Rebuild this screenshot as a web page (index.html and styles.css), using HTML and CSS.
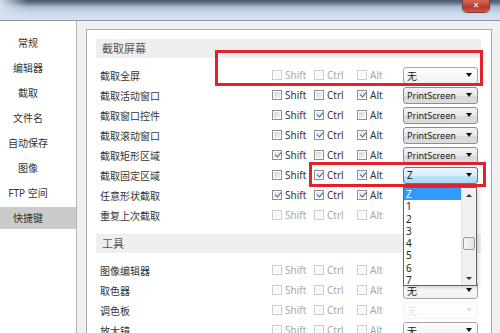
FILE: index.html
```html
<!DOCTYPE html>
<html lang="zh-CN">
<head>
  <meta charset="UTF-8">
  <title>选项 - 快捷键</title>
  <link rel="stylesheet" href="styles.css">
</head>
<body>
  <div class="titlebar">
    <span class="close">✕</span>
  </div>

  <div class="frame">
    <ul class="nav">
      <li>常规</li>
      <li>编辑器</li>
      <li>截取</li>
      <li>文件名</li>
      <li>自动保存</li>
      <li>图像</li>
      <li>FTP 空间</li>
      <li class="active">快捷键</li>
    </ul>

    <div class="panel">
      <div class="section-head">截取屏幕</div>
      <div class="rows">
        <div class="row off">
          <span class="label">截取全屏</span>
          <span class="chk"><i class="box"></i>Shift</span>
          <span class="chk"><i class="box"></i>Ctrl</span>
          <span class="chk"><i class="box"></i>Alt</span>
          <span class="select plain">无</span>
        </div>
        <div class="row">
          <span class="label">截取活动窗口</span>
          <span class="chk"><i class="box"></i>Shift</span>
          <span class="chk"><i class="box"></i>Ctrl</span>
          <span class="chk"><i class="box on"></i>Alt</span>
          <span class="select">PrintScreen</span>
        </div>
        <div class="row">
          <span class="label">截取窗口控件</span>
          <span class="chk"><i class="box"></i>Shift</span>
          <span class="chk"><i class="box on"></i>Ctrl</span>
          <span class="chk"><i class="box"></i>Alt</span>
          <span class="select">PrintScreen</span>
        </div>
        <div class="row">
          <span class="label">截取滚动窗口</span>
          <span class="chk"><i class="box"></i>Shift</span>
          <span class="chk"><i class="box on"></i>Ctrl</span>
          <span class="chk"><i class="box on"></i>Alt</span>
          <span class="select">PrintScreen</span>
        </div>
        <div class="row">
          <span class="label">截取矩形区域</span>
          <span class="chk"><i class="box on"></i>Shift</span>
          <span class="chk"><i class="box"></i>Ctrl</span>
          <span class="chk"><i class="box"></i>Alt</span>
          <span class="select">PrintScreen</span>
        </div>
        <div class="row">
          <span class="label">截取固定区域</span>
          <span class="chk"><i class="box"></i>Shift</span>
          <span class="chk"><i class="box on"></i>Ctrl</span>
          <span class="chk"><i class="box on"></i>Alt</span>
          <span class="select open">Z</span>
        </div>
        <div class="row">
          <span class="label">任意形状截取</span>
          <span class="chk"><i class="box on"></i>Shift</span>
          <span class="chk"><i class="box on"></i>Ctrl</span>
          <span class="chk"><i class="box on"></i>Alt</span>
        </div>
        <div class="row off">
          <span class="label">重复上次截取</span>
          <span class="chk"><i class="box"></i>Shift</span>
          <span class="chk"><i class="box"></i>Ctrl</span>
          <span class="chk"><i class="box"></i>Alt</span>
        </div>
      </div>

      <div class="section-head">工具</div>
      <div class="rows">
        <div class="row off">
          <span class="label">图像编辑器</span>
          <span class="chk"><i class="box"></i>Shift</span>
          <span class="chk"><i class="box"></i>Ctrl</span>
          <span class="chk"><i class="box"></i>Alt</span>
        </div>
        <div class="row off">
          <span class="label">取色器</span>
          <span class="chk"><i class="box"></i>Shift</span>
          <span class="chk"><i class="box"></i>Ctrl</span>
          <span class="chk"><i class="box"></i>Alt</span>
          <span class="select plain">无</span>
        </div>
        <div class="row off">
          <span class="label">调色板</span>
          <span class="chk"><i class="box"></i>Shift</span>
          <span class="chk"><i class="box"></i>Ctrl</span>
          <span class="chk"><i class="box"></i>Alt</span>
          <span class="select plain ghost">无</span>
        </div>
        <div class="row off">
          <span class="label">放大镜</span>
          <span class="chk"><i class="box"></i>Shift</span>
          <span class="chk"><i class="box"></i>Ctrl</span>
          <span class="chk"><i class="box"></i>Alt</span>
          <span class="select plain">无</span>
        </div>
      </div>
    </div>
  </div>

  <!-- red annotation boxes -->
  <div class="mark mark-1"></div>
  <div class="mark mark-2"></div>

  <!-- open dropdown of the 截取固定区域 select -->
  <div class="dropdown">
    <ul class="options">
      <li class="selected">Z</li>
      <li>1</li>
      <li>2</li>
      <li>3</li>
      <li>4</li>
      <li>5</li>
      <li>6</li>
      <li>7</li>
    </ul>
    <div class="scrollbar">
      <span class="arrow up"></span>
      <span class="track"><span class="thumb"></span></span>
      <span class="arrow down"></span>
    </div>
  </div>
</body>
</html>
```

FILE: styles.css
```css
body {
  margin: 0;
  width: 500px;
  height: 333px;
  overflow: hidden;
  position: relative;
  background-color: #ececec;
  font-family: "Noto Sans", "Noto Sans CJK SC", sans-serif;
  font-size: 10px;
  color: #333;
}

.titlebar {
  position: relative;
  height: 20px;
  border-bottom: 1px solid #8595a8;
  background:
    linear-gradient(to right, rgba(214, 226, 238, 0.95) 0, rgba(214, 226, 238, 0) 28px),
    linear-gradient(to bottom, #4a5668 0, #65768b 3px, #a9bdd2 7px, #c9d9ea 13px, #d8e4f0 20px);
}

.close {
  position: absolute;
  right: 11px;
  top: 0;
  width: 26px;
  height: 12px;
  line-height: 12px;
  text-align: center;
  font-size: 8px;
  color: #fff;
  font-family: "DejaVu Sans", sans-serif;
  border-radius: 0 0 4px 4px;
  background: linear-gradient(#d76a5c, #b73a2a 60%, #c9584a);
  box-shadow: 0 0 0 1px #7d3a33;
}

.frame {
  display: flex;
  height: 312px;
  background-color: #f0f0f0;
}

.nav {
  width: 76px;
  margin: 0;
  padding: 11px 0 0;
  list-style: none;
  background-color: #fff;
  border-right: 1px solid #b4b4b4;
}

.nav li {
  height: 22px;
  line-height: 22px;
  margin-bottom: 3px;
  padding-right: 20px;
  text-align: center;
  font-size: 10px;
  color: #333;
}

.nav li.active {
  background-color: #cbcbcb;
}

.panel {
  flex: 1;
  margin: 8px 8px 0 9px;
  padding: 9px 10px 0 9px;
  background-color: #fff;
  border: 1px solid #a9a9a9;
  border-bottom: none;
}

.section-head {
  height: 19px;
  line-height: 19px;
  padding-left: 6px;
  background-color: #efefef;
  font-size: 11px;
  color: #555;
}

.rows {
  padding: 7px 0 9px;
}

.row {
  display: grid;
  grid-template-columns: 172px 42px 43px 46px 75px;
  align-items: center;
  height: 20px;
  padding-left: 4px;
}

.label {
  font-size: 10px;
  color: #333;
}

.chk {
  display: flex;
  align-items: center;
  gap: 3px;
  font-size: 10px;
  color: #333;
}

.box {
  position: relative;
  width: 10px;
  height: 10px;
  box-sizing: border-box;
  border: 1px solid #8e8f8f;
  background: linear-gradient(135deg, #d2d4d8, #f7f7f7);
  box-shadow: inset 0 0 0 1px #fff;
}

.box.on {
  background: linear-gradient(135deg, #dfe4ec, #f7f8fa);
}

.box.on::after {
  content: "";
  position: absolute;
  left: 2.5px;
  top: 0;
  width: 3px;
  height: 5px;
  border: solid #46629c;
  border-width: 0 1.5px 1.5px 0;
  transform: rotate(40deg);
}

.row.off .chk {
  color: #a8a8a8;
}

.row.off .box {
  border-color: #cdcdcd;
  background: #f8f8f8;
}

.select {
  display: flex;
  align-items: center;
  justify-content: space-between;
  height: 17px;
  box-sizing: border-box;
  padding: 0 5px 0 3px;
  border: 1px solid #8c8c8c;
  border-radius: 3px;
  background: linear-gradient(#f3f3f3, #e8e8e8 50%, #d8d8d8 51%, #dddddd);
  font-size: 9px;
  color: #222;
}

.select::after {
  content: "";
  border-left: 3px solid transparent;
  border-right: 3px solid transparent;
  border-top: 4px solid #111;
}

.select.plain {
  border-color: #a6a6a6;
  background: linear-gradient(#fdfdfd, #f1f1f1);
  font-family: "Noto Sans CJK SC", sans-serif;
  font-size: 10px;
}

.select.open {
  border-color: #3c7fb1;
  background: linear-gradient(#eaf6fd, #d9effc 50%, #bee6fd 51%, #a7d9f5);
  font-size: 10px;
}

.select.ghost {
  opacity: 0.12;
}

.mark {
  position: absolute;
  box-sizing: border-box;
  border: 3px solid #e3212b;
}

.mark-1 {
  left: 215px;
  top: 50px;
  width: 268px;
  height: 36px;
}

.mark-2 {
  left: 309px;
  top: 162px;
  width: 177px;
  height: 25px;
}

.dropdown {
  position: absolute;
  left: 403px;
  top: 187px;
  width: 74px;
  height: 99px;
  box-sizing: border-box;
  display: flex;
  border: 1px solid #646464;
  background-color: #fff;
  box-shadow: 2px 2px 3px rgba(0, 0, 0, 0.15);
}

.options {
  flex: 1;
  margin: 0;
  padding: 0;
  list-style: none;
}

.options li {
  height: 12.3px;
  line-height: 12px;
  padding-left: 2px;
  font-size: 10px;
  color: #222;
}

.options li.selected {
  background-color: #3399ff;
  color: #fff;
}

.scrollbar {
  width: 14px;
  display: flex;
  flex-direction: column;
  background-color: #f0f0f0;
  border-left: 1px solid #e2e2e2;
}

.arrow {
  height: 14px;
  display: flex;
  align-items: center;
  justify-content: center;
}

.arrow::after {
  content: "";
  border-left: 3px solid transparent;
  border-right: 3px solid transparent;
}

.arrow.up::after {
  border-bottom: 3px solid #333;
}

.arrow.down::after {
  border-top: 3px solid #333;
}

.track {
  flex: 1;
  padding-top: 35px;
}

.thumb {
  display: block;
  height: 13px;
  margin: 0 1px;
  box-sizing: border-box;
  border: 1px solid #9a9a9a;
  border-radius: 2px;
  background: linear-gradient(to right, #f4f4f4, #e2e2e2);
}
```
